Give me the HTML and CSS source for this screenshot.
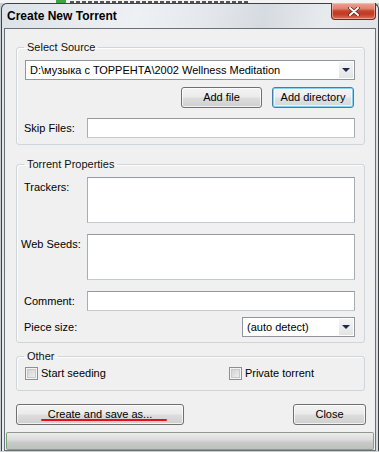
FILE: index.html
```html
<!DOCTYPE html>
<html lang="en">
<head>
<meta charset="utf-8">
<title>Create New Torrent</title>
<link rel="stylesheet" href="styles.css">
</head>
<body>
<div class="strip"><span class="strip-icon"></span><span class="strip-text"></span></div>
<div class="window">
  <div class="titlebar">
    <span class="title">Create New Torrent</span>
    <button class="close-btn" aria-label="Close">
      <svg width="12" height="9" viewBox="0 0 12 9">
        <path d="M2 1 L10 8 M10 1 L2 8" stroke="#5a1a10" stroke-width="3.4" stroke-linecap="round"/>
        <path d="M2 1 L10 8 M10 1 L2 8" stroke="#ffffff" stroke-width="2" stroke-linecap="round"/>
      </svg>
    </button>
  </div>
  <div class="client">
    <fieldset class="group group-source">
      <legend>Select Source</legend>
      <div class="combo">
        <span class="combo-text">D:\музыка с ТОРРЕНТА\2002 Wellness Meditation</span>
        <span class="combo-arrow"><span class="tri"></span></span>
      </div>
      <div class="btn-row">
        <button class="btn btn-small">Add file</button>
        <button class="btn btn-small btn-default">Add directory</button>
      </div>
      <div class="field-row skip-row">
        <span class="field-label">Skip Files:</span>
        <div class="textbox"></div>
      </div>
    </fieldset>

    <fieldset class="group group-props">
      <legend>Torrent Properties</legend>
      <div class="field-row area-row first-row">
        <span class="field-label">Trackers:</span>
        <div class="textbox textarea"></div>
      </div>
      <div class="field-row area-row">
        <span class="field-label label-wide">Web Seeds:</span>
        <div class="textbox textarea"></div>
      </div>
      <div class="field-row area-row">
        <span class="field-label">Comment:</span>
        <div class="textbox"></div>
      </div>
      <div class="piece-row">
        <span class="field-label">Piece size:</span>
        <div class="combo combo-piece">
          <span class="combo-text">(auto detect)</span>
          <span class="combo-arrow"><span class="tri"></span></span>
        </div>
      </div>
    </fieldset>

    <fieldset class="group group-other">
      <legend>Other</legend>
      <div class="check-row">
        <label class="check"><span class="checkbox"></span><span>Start seeding</span></label>
        <label class="check check-private"><span class="checkbox"></span><span>Private torrent</span></label>
      </div>
    </fieldset>

    <div class="action-row">
      <button class="btn btn-create">Create and save as...<span class="annotation"></span></button>
      <button class="btn btn-close">Close</button>
    </div>

    <div class="progress"></div>
  </div>
</div>
</body>
</html>
```
FILE: styles.css
```css
* { box-sizing: border-box; }

html, body {
  margin: 0;
  padding: 0;
}

body {
  width: 379px;
  height: 452px;
  overflow: hidden;
  background: #c9ced3;
  font-family: "Liberation Sans", Arial, sans-serif;
  font-size: 11px;
  line-height: 13px;
  color: #000;
}

.strip {
  height: 3px;
  background: #f3f3f3;
  display: flex;
  align-items: flex-end;
  padding-left: 56px;
  gap: 4px;
}
.strip-icon {
  width: 10px;
  height: 3px;
  background: #3aa83a;
}
.strip-text {
  width: 180px;
  height: 2px;
  background: repeating-linear-gradient(90deg, #555 0 4px, transparent 4px 6px);
}

.window {
  width: 378px;
  margin-left: 1px;
  border: 1px solid #3d4247;
  border-bottom: none;
  border-radius: 6px 6px 0 0;
  padding: 0 2px 0 2px;
  background: linear-gradient(100deg, #dde2e8 0%, #eef1f4 30%, #e4e8ec 45%, #d6dbe1 58%, #e8ebee 72%, #d3d8de 100%);
}

.titlebar {
  height: 24px;
  display: flex;
  justify-content: space-between;
  align-items: center;
  padding-left: 3px;
}

.title {
  font-weight: bold;
  font-size: 12px;
  color: #000;
}

.close-btn {
  align-self: flex-start;
  margin-top: -1px;
  width: 45px;
  height: 17px;
  padding: 0;
  border: 1px solid #6e2a20;
  border-top: none;
  border-radius: 0 0 4px 4px;
  background: linear-gradient(#e8a594 0%, #de8470 35%, #c9412b 50%, #c23a24 70%, #d8735e 100%);
  display: flex;
  align-items: center;
  justify-content: center;
  box-shadow: inset 0 0 0 1px rgba(255, 210, 200, 0.5);
}

.client {
  width: 372px;
  border: 1px solid #6a7077;
  background: #f0f0f0;
  display: flex;
  flex-direction: column;
}

.group {
  margin: 0 10px 0 11px;
  padding: 0 9px 0 8px;
  border: 1px solid #d0d5da;
  border-radius: 3px;
  min-inline-size: 0;
  box-shadow: inset 1px 1px 0 #fdfdfd;
}

.group legend {
  margin-left: -1px;
  padding: 0 3px;
  font-size: 11px;
  line-height: 13px;
  color: #111;
}

.group-source { margin-top: 12px; padding-bottom: 6px; }
.group-props { margin-top: 13px; padding-bottom: 5px; }
.group-other { margin-top: 7px; padding-bottom: 10px; }

.combo {
  height: 20px;
  border: 1px solid #8f969e;
  background: #fff;
  display: flex;
  align-items: center;
  justify-content: space-between;
  padding: 0 1px 0 4px;
}
.group-source .combo { margin-top: 6px; }

.combo-text {
  white-space: nowrap;
  overflow: hidden;
}

.combo-arrow {
  width: 14px;
  height: 16px;
  background: linear-gradient(#f4f4f4, #e4e4e4);
  display: flex;
  align-items: center;
  justify-content: center;
}
.tri {
  width: 0;
  height: 0;
  border-left: 4px solid transparent;
  border-right: 4px solid transparent;
  border-top: 4px solid #1b2755;
}

.btn-row {
  margin-top: 7px;
  display: flex;
  justify-content: flex-end;
  gap: 10px;
  padding-right: 1px;
}

.btn {
  height: 21px;
  padding: 0;
  border: 1px solid #707070;
  border-radius: 3px;
  background: linear-gradient(#f3f3f3 0%, #ebebeb 48%, #dddddd 52%, #cfcfcf 100%);
  font-family: "Liberation Sans", Arial, sans-serif;
  font-size: 11px;
  line-height: 13px;
  color: #000;
  box-shadow: inset 0 0 0 1px rgba(255, 255, 255, 0.7);
}

.btn-small { width: 81px; }
.btn-default {
  width: 82px;
  border-color: #3c7fb1;
  box-shadow: inset 0 0 0 1px #86d1f2, inset 0 0 0 2px rgba(255,255,255,0.6);
  background: linear-gradient(#f2f6f8 0%, #eaeef0 48%, #dde2e4 52%, #d2d8da 100%);
}

.field-row {
  display: grid;
  grid-template-columns: 62px 1fr;
  align-items: start;
}
.skip-row { margin-top: 10px; align-items: center; }

.field-label {
  margin-left: -1px;
  white-space: nowrap;
}
.area-row .field-label { padding-top: 4px; }
.label-wide { margin-left: -4px; }

.textbox {
  height: 20px;
  background: #fff;
  border: 1px solid #a7adb4;
  border-top-color: #9299a1;
  border-bottom-color: #c5cacf;
}
.textarea { height: 46px; }

.area-row { margin-top: 11px; }
.first-row { margin-top: 6px; }

.piece-row {
  margin-top: 6px;
  display: flex;
  justify-content: space-between;
  align-items: center;
}
.combo-piece { width: 113px; }

.check-row {
  margin-top: 4px;
  display: flex;
  height: 13px;
}
.check {
  display: flex;
  align-items: center;
  gap: 3px;
}
.check-private { margin-left: auto; margin-right: 41px; }

.checkbox {
  width: 13px;
  height: 13px;
  border: 1px solid #8e8f8f;
  box-shadow: inset 0 0 0 1px #f4f4f4, inset 0 0 0 2px #c9c9c9;
  background-image: linear-gradient(135deg, #cbcbcb, #f6f6f6);
}

.action-row {
  margin: 13px 9px 0 11px;
  display: flex;
  justify-content: space-between;
}
.btn-create {
  width: 168px;
  position: relative;
}
.btn-close { width: 73px; }

.annotation {
  position: absolute;
  left: 24px;
  top: 14px;
  width: 126px;
  height: 2px;
  background: #e3101c;
  border-radius: 1px;
}

.progress {
  margin: 7px 1px 0 1px;
  height: 18px;
  border: 1px solid #8e9a8e;
  border-left-color: #7aa27a;
  border-radius: 2px;
  background: linear-gradient(#ececec 0%, #dcdcdc 40%, #c8cac8 60%, #bdc0bd 100%);
}
```
